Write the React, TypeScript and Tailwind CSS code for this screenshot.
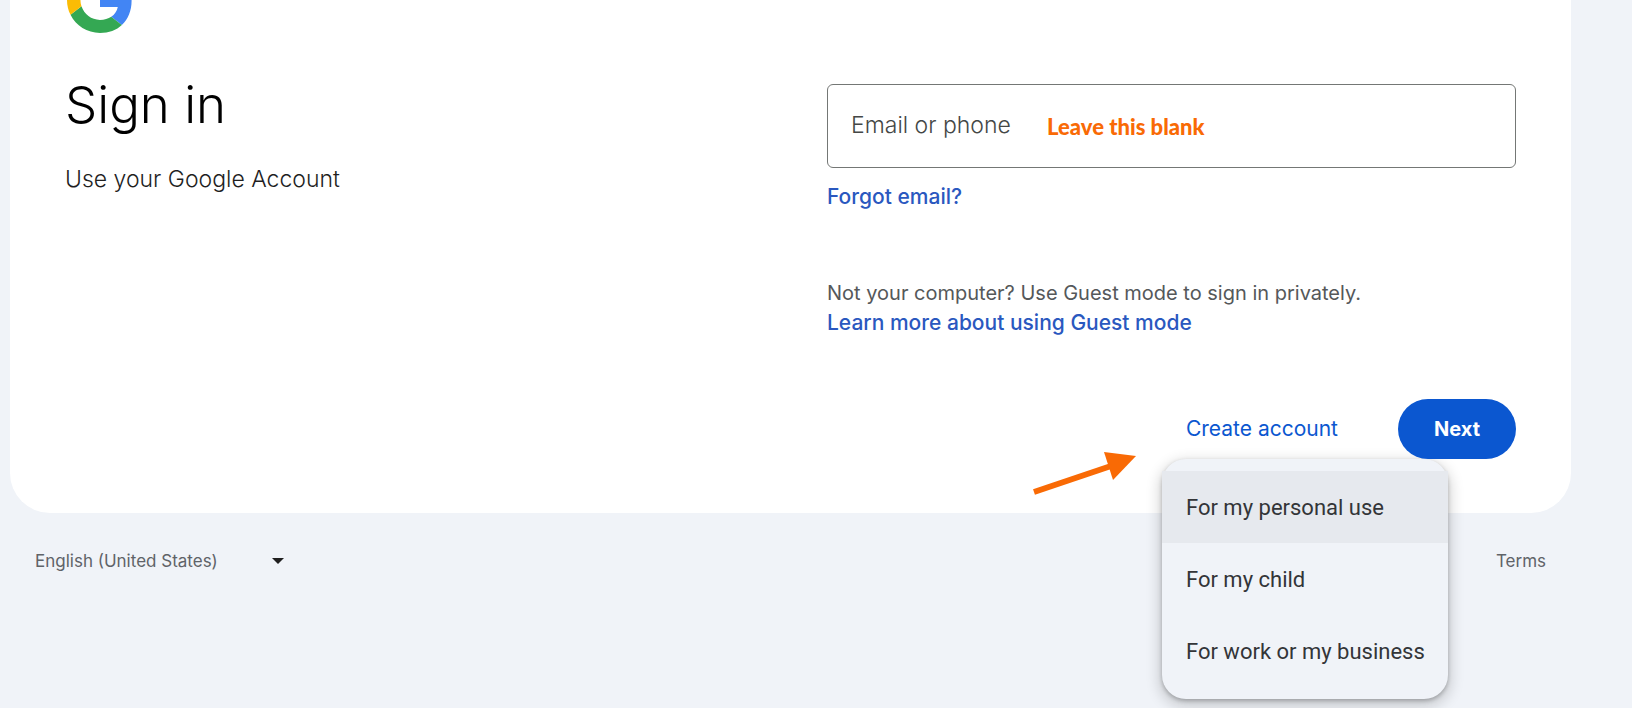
import { useState } from "react";

const menuItems = ["For my personal use", "For my child", "For work or my business"];

function GoogleLogo() {
  return (
    <svg viewBox="0 0 48 48" className="ml-[2px] h-[66px] w-[66px]" role="img" aria-label="Google">
      <path fill="#4285F4" d="M46.98 24.55c0-1.57-.15-3.09-.38-4.55H24v9.02h12.94c-.58 2.96-2.26 5.48-4.78 7.18l7.73 6c4.51-4.18 7.09-10.36 7.09-17.65z" />
      <path fill="#34A853" d="M24 48c6.48 0 11.93-2.13 15.89-5.81l-7.73-6c-2.15 1.45-4.92 2.3-8.16 2.3-6.26 0-11.57-4.22-13.47-9.91l-7.98 6.19C6.51 42.62 14.62 48 24 48z" />
      <path fill="#FBBC05" d="M10.53 28.59c-.48-1.45-.76-2.99-.76-4.59s.27-3.14.76-4.59l-7.98-6.19C.92 16.46 0 20.12 0 24c0 3.88.92 7.54 2.56 10.78l7.97-6.19z" />
      <path fill="#EA4335" d="M24 9.5c3.54 0 6.71 1.22 9.21 3.6l6.85-6.85C35.9 2.38 30.47 0 24 0 14.62 0 6.51 5.38 2.56 13.22l7.98 6.19C12.43 13.72 17.74 9.5 24 9.5z" />
    </svg>
  );
}

function CreateAccountMenu() {
  const [active, setActive] = useState(0);

  return (
    <div className="relative flex items-center">
      <button type="button" aria-haspopup="menu" aria-expanded="true" className="h-[60px] px-6 text-[21px] text-[#0b57d0]">
        Create account
      </button>
      <svg viewBox="0 0 104 44" className="absolute top-[53px] -left-[129px] h-11 w-[104px]" aria-hidden="true">
        <path d="M1 40 L78 14" stroke="#f96a05" strokeWidth="6" fill="none" />
        <path d="M71 0 L103 4 L80 28 Z" fill="#f96a05" />
      </svg>
      <div role="menu" className="absolute top-[60px] left-0 w-[286px] rounded-[24px] bg-[#f0f3f8] py-3 shadow-[0_5px_13px_4px_rgba(0,0,0,0.14),0_2px_4px_rgba(0,0,0,0.25)]">
        {menuItems.map((item, i) => (
          <button
            key={item}
            type="button"
            role="menuitem"
            onMouseEnter={() => setActive(i)}
            className={`block h-[72px] w-full px-6 text-left font-[Roboto,sans-serif] text-[22px] whitespace-nowrap text-[#333538] ${i === active ? "bg-[#e6e9ee]" : ""}`}
          >
            {item}
          </button>
        ))}
      </div>
    </div>
  );
}

export default function App() {
  return (
    <div className="min-h-screen overflow-hidden bg-[#f0f3f8] font-[Inter,sans-serif]">
      <main className="-mt-[73px] mr-[61px] ml-[10px] rounded-[40px] bg-white px-[55px] pt-10 pb-[54px]">
        <GoogleLogo />
        <div className="mt-12 grid grid-cols-[minmax(0,762fr)_minmax(0,689fr)]">
          <div>
            <h1 className="text-[51px] leading-12 font-light text-black">Sign in</h1>
            <p className="mt-8 text-[23px] leading-9 font-light text-[#1f1f1f]">Use your Google Account</p>
          </div>
          <form onSubmit={(e) => e.preventDefault()} className="pt-[3px]">
            <div className="relative">
              <input
                type="text"
                aria-label="Email or phone"
                placeholder="Email or phone"
                className="block h-[84px] w-full rounded-md border border-[#747775] px-[23px] pb-[2px] text-[23px] font-light placeholder:text-[#444746]"
              />
              <span className="absolute top-[28px] left-[220px] font-[Lato,sans-serif] text-[22px] leading-[30px] font-black whitespace-nowrap text-[#f96a05]">
                Leave this blank
              </span>
            </div>
            <a href="#" className="mt-[14px] block text-[21px] leading-[30px] font-medium text-[#2a58bf]">Forgot email?</a>
            <p className="mt-[66px] text-xl leading-[30px] text-[#55585a]">
              Not your computer? Use Guest mode to sign in privately.
            </p>
            <a href="#" className="block text-[21px] leading-[30px] font-medium text-[#2a58bf]">Learn more about using Guest mode</a>
            <div className="mt-[61px] flex justify-end gap-9">
              <CreateAccountMenu />
              <button type="submit" className="relative h-[60px] w-[118px] rounded-full bg-[#0b57d0] text-xl font-bold text-white">
                Next
              </button>
            </div>
          </form>
        </div>
      </main>
      <footer className="mr-[61px] ml-[10px] flex items-center justify-between px-[25px] pt-8 text-[17px] leading-8 text-[#5f6368]">
        <div className="relative">
          <select aria-label="Language" className="w-[260px] appearance-none bg-transparent">
            <option>English (United States)</option>
          </select>
          <svg viewBox="0 0 12 6" className="pointer-events-none absolute top-[13px] right-[11px] h-[6px] w-3" aria-hidden="true">
            <path d="M0 0h12L6 6z" fill="#1f1f1f" />
          </svg>
        </div>
        <a href="#">Terms</a>
      </footer>
    </div>
  );
}
